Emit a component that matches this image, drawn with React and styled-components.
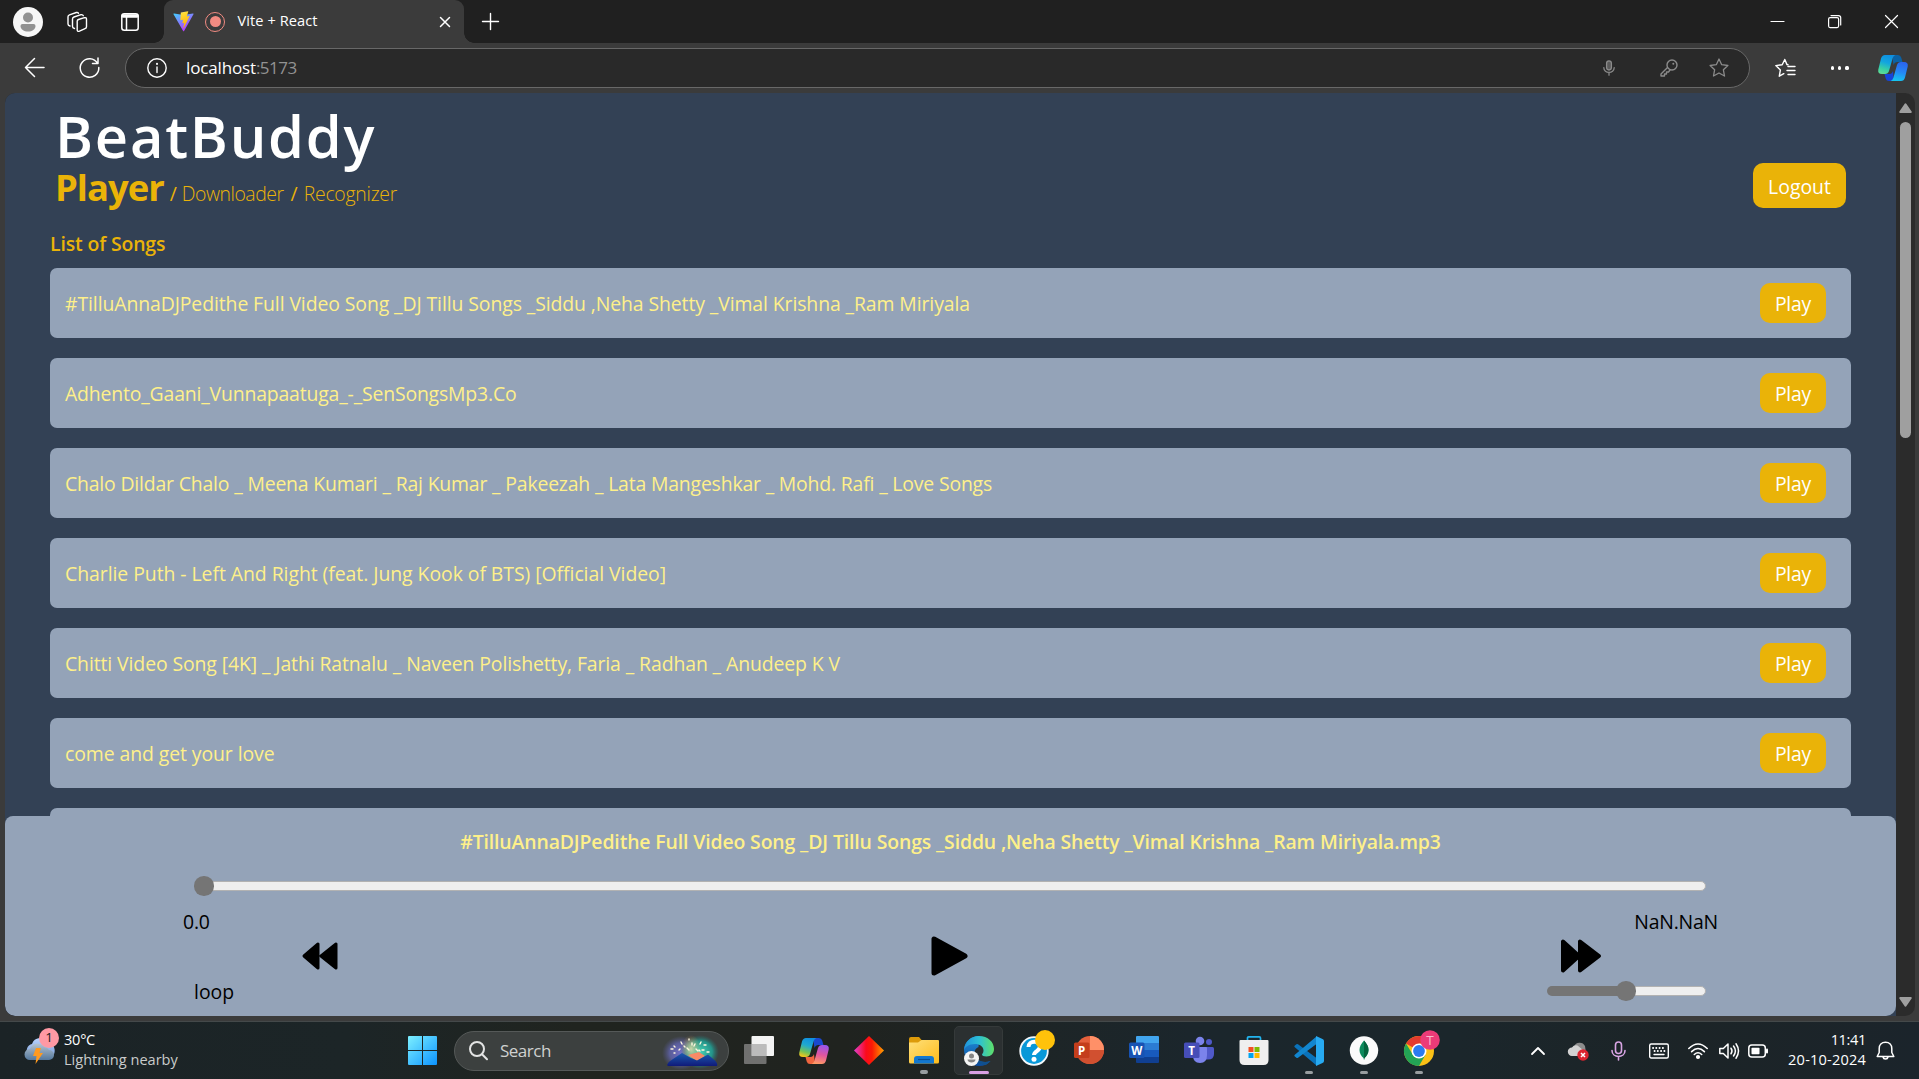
import React from "react";
import styled, { createGlobalStyle } from "styled-components";

const Global = createGlobalStyle`
  * { box-sizing: border-box; }
  html, body { margin: 0; height: 100%; overflow: hidden; background: #3b3b3b; }
  body { font-family: "Open Sans", "Noto Sans", sans-serif; }
  #root { height: 100vh; }
  svg { display: block; flex: none; overflow: visible; }
`;

const Screen = styled.div`
  display: flex;
  flex-direction: column;
  width: 100%;
  height: 100vh;
  overflow: hidden;
  white-space: nowrap;
  font-size: 19.4px;
  line-height: 30px;
`;

/* ---------- browser chrome ---------- */

const TabStrip = styled.div`
  display: flex;
  align-items: center;
  height: 43px;
  flex: none;
  background: #202020;
`;

const StripIcons = styled.div`
  display: grid;
  grid-template-columns: 53px 55px 18px;
  align-items: center;
  width: 164px;
  padding-left: 13px;
`;

const Tab = styled.div`
  position: relative;
  display: flex;
  align-items: center;
  width: 300px;
  height: 43px;
  padding: 0 13px 0 9px;
  background: #3b3b3b;
  border-radius: 9px 9px 0 0;
  color: #fff;
  font-size: 14.6px;
  &::before, &::after {
    content: "";
    position: absolute;
    bottom: 0;
    width: 10px;
    height: 10px;
  }
  &::before { left: -10px; background: radial-gradient(circle at 0 0, transparent 9.5px, #3b3b3b 10px); }
  &::after { right: -10px; background: radial-gradient(circle at 100% 0, transparent 9.5px, #3b3b3b 10px); }
`;

const TabTitle = styled.span`
  flex: 1;
  margin-left: 12.5px;
  padding-bottom: 3px;
  letter-spacing: 0.07px;
`;

const RecordDot = styled.i`
  display: grid;
  place-items: center;
  width: 20px;
  height: 20px;
  margin-left: 11px;
  border: 1.5px solid #f28b82;
  border-radius: 50%;
  &::after { content: ""; width: 11px; height: 11px; border-radius: 50%; background: #f28b82; }
`;

const NewTab = styled.div`
  flex: 1;
  padding-left: 18px;
`;

const WindowButtons = styled.div`
  display: flex;
  align-items: center;
  gap: 44px;
  padding-right: 21px;
`;

const Toolbar = styled.div`
  display: flex;
  align-items: center;
  height: 50px;
  flex: none;
  padding-left: 24px;
  background: #3b3b3b;
`;

const NavButtons = styled.div`
  display: flex;
  align-items: center;
  width: 101px;
  gap: 34px;
  padding-bottom: 1px;
`;

const AddressBar = styled.div`
  display: flex;
  align-items: center;
  width: 1625px;
  height: 40px;
  padding: 0 20px 0 21px;
  border: 1.5px solid #686868;
  border-radius: 20px;
  background: #292929;
`;

const Url = styled.span`
  flex: 1;
  margin-left: 19px;
  color: #fff;
  font-size: 17px;
  letter-spacing: -0.15px;
`;

const Port = styled.span`
  color: #929292;
  letter-spacing: -0.5px;
`;

const MicSlot = styled.div`
  margin-right: 45px;
`;

const BarIcons = styled.div`
  display: flex;
  align-items: center;
  gap: 31px;
`;

const ToolIcons = styled.div`
  display: flex;
  align-items: center;
  flex: 1;
  padding-left: 25px;
`;

const More = styled.div`
  display: flex;
  gap: 4px;
  margin: 0 29px 0 36px;
  i { width: 3.2px; height: 3.2px; border-radius: 50%; background: #fff; }
`;

/* ---------- web page ---------- */

const Viewport = styled.div`
  position: relative;
  display: flex;
  width: 1910px;
  height: 923px;
  flex: none;
  margin-left: 5px;
  border-radius: 10px;
  overflow: hidden;
  background: #2b2b2b;
`;

const Page = styled.main`
  width: 1891px;
  height: 100%;
  overflow: hidden;
  background: #334155;
`;

const Header = styled.header`
  display: flex;
  justify-content: space-between;
  align-items: flex-end;
  padding: 13px 50px 0 50px;
`;

const Brand = styled.h1`
  margin: 0;
  color: #fff;
  font-size: 57.8px;
  font-weight: 600;
  line-height: 60px;
  letter-spacing: 1.75px;
`;

const Crumbs = styled.nav`
  height: 44px;
  line-height: 42px;
  color: #eab308;
`;

const Crumb = styled.a`
  font-size: ${(p) => (p.$active ? "36.4px" : "19.4px")};
  font-weight: ${(p) => (p.$active ? 700 : 300)};
  letter-spacing: ${(p) => p.$track}px;
`;

const Slash = styled.span`
  margin: 0 ${(p) => p.$after}px 0 ${(p) => p.$before}px;
`;

const Pill = styled.button`
  display: grid;
  place-items: center;
  width: ${(p) => (p.$large ? 93 : 66)}px;
  height: ${(p) => (p.$large ? 45 : 40)}px;
  margin: 0 0 ${(p) => (p.$large ? 2 : 0)}px;
  padding: 2px 0 0;
  border: 0;
  border-radius: 10px;
  background: #eab308;
  color: #fff;
  font: inherit;
  letter-spacing: ${(p) => (p.$large ? 0 : -0.2)}px;
`;

const Songs = styled.section`
  padding: 19px 45px 0;
`;

const Heading = styled.h2`
  height: 39px;
  margin: 0;
  color: #eab308;
  font-size: 19.4px;
  font-weight: 600;
  letter-spacing: -0.13px;
`;

const SongRow = styled.div`
  display: flex;
  justify-content: space-between;
  align-items: center;
  height: 70px;
  margin-bottom: 20px;
  padding: 0 25px 0 15px;
  border-radius: 7px;
  background: #94a3b8;
  color: #fef08a;
`;

const SongName = styled.span`
  padding-top: 2px;
  letter-spacing: ${(p) => p.$track}px;
`;

const PlayerBar = styled.footer`
  position: absolute;
  left: 0;
  bottom: 0;
  width: 1891px;
  height: 200px;
  padding-top: 11px;
  border-radius: 8px 8px 10px 10px;
  background: #94a3b8;
  color: #000;
`;

const NowPlaying = styled.div`
  text-align: center;
  color: #fef08a;
  font-weight: 600;
  letter-spacing: -0.122px;
`;

const SeekRow = styled.div`
  padding: 19px 191px 0 189px;
`;

const Track = styled.div`
  display: flex;
  align-items: center;
  width: ${(p) => p.$width}px;
  height: 20px;
`;

const Filled = styled.i`
  width: ${(p) => p.$length}px;
  height: 10px;
  margin-right: -9px;
  border-radius: 5px 0 0 5px;
  background: #757575;
`;

const Rest = styled.i`
  flex: 1;
  height: 10px;
  margin-left: -8px;
  border: 1px solid #b2b2b2;
  border-radius: 5px;
  background: #efefef;
`;

const Thumb = styled.i`
  z-index: 1;
  width: 19.5px;
  height: 19.5px;
  border-radius: 50%;
  background: #757575;
`;

const Times = styled.div`
  display: flex;
  justify-content: space-between;
  height: 40px;
  padding: 11px 178px 0;
  letter-spacing: -0.2px;
`;

const Controls = styled.div`
  display: flex;
  align-items: center;
  justify-content: space-between;
  height: 40px;
  padding: 0 295px 0 297px;
`;

const BottomRow = styled.div`
  display: flex;
  align-items: center;
  justify-content: space-between;
  height: 30px;
  padding: 0 190px 0 189px;
`;

const LoopLabel = styled.span`
  padding-top: 2px;
`;

const ScrollBar = styled.div`
  display: flex;
  flex-direction: column;
  align-items: center;
  width: 19px;
  padding: 10px 0 9px;
`;

const ScrollThumb = styled.div`
  width: 11px;
  height: 316px;
  margin: 9px 0 auto;
  border-radius: 6px;
  background: #9f9f9f;
`;

/* ---------- taskbar ---------- */

const Taskbar = styled.div`
  display: flex;
  align-items: center;
  height: 58px;
  flex: none;
  margin-top: 5px;
  border-top: 1px solid #44494a;
  background: linear-gradient(90deg, #1b2326 0%, #1c2527 18%, #20241f 30%, #20231f 44%, #1b262c 62%, #1b262b 76%, #1c2427 88%, #1b242b 100%);
`;

const Weather = styled.div`
  display: flex;
  align-items: center;
  width: 395px;
  padding-left: 24px;
`;

const WeatherIcon = styled.div`
  position: relative;
  width: 40px;
  height: 46px;
  padding-top: 7px;
`;

const Badge = styled.b`
  position: absolute;
  left: 15px;
  top: 0;
  width: 20px;
  height: 20px;
  border-radius: 50%;
  background: #ff99a4;
  color: #1b1b1b;
  font-size: 13.5px;
  font-weight: 400;
  line-height: 19px;
  text-align: center;
`;

const TwoLines = styled.div`
  display: flex;
  flex-direction: column;
  padding-bottom: 4px;
  font-size: 14.55px;
  line-height: 20px;
  text-align: ${(p) => p.$align || "left"};
`;

const Line = styled.span`
  color: ${(p) => (p.$muted ? "#c9cbcb" : "#fff")};
  letter-spacing: ${(p) => p.$track || 0}px;
`;

const StartCell = styled.div`
  display: flex;
  justify-content: center;
  width: 55px;
`;

const SearchBox = styled.div`
  display: flex;
  align-items: center;
  width: 275px;
  height: 40px;
  margin-left: 4px;
  padding: 0 9px 0 14px;
  border: 1px solid #555958;
  border-radius: 20px;
  background: #3c403f;
  color: #cfd1d0;
  font-size: 17px;
  letter-spacing: -0.5px;
  span { flex: 1; margin-left: 12px; }
`;

const Apps = styled.div`
  display: flex;
  width: 720px;
  margin-left: 2px;
`;

const AppCell = styled.div`
  display: flex;
  flex-direction: column;
  align-items: center;
  width: 49px;
  height: 49px;
  margin: 0 3px;
  padding-top: 9px;
  border: 1px solid ${(p) => (p.$active ? "#353a3a" : "transparent")};
  border-radius: 5px;
  background: ${(p) => (p.$active ? "#2b3031" : "transparent")};
  &::after {
    content: "";
    width: ${(p) => (p.$active ? 20 : 8)}px;
    height: 4px;
    margin-top: 5px;
    border-radius: 2px;
    background: ${(p) => (p.$active ? "#d9a0e4" : p.$running ? "#989da0" : "transparent")};
  }
`;

const Tray = styled.div`
  display: flex;
  align-items: center;
  justify-content: flex-end;
  flex: 1;
  padding-right: 24px;
`;

const TraySlot = styled.div`
  display: flex;
  justify-content: center;
  width: ${(p) => p.$w}px;
`;

const Clock = styled.div`
  display: flex;
  justify-content: flex-end;
  width: 101px;
  padding-right: 10px;
`;

/* ---------- drawings ---------- */

const Stroke = ({ size = 20, color = "#fff", w = 1.5, children }) => (
  <svg width={size} height={size} viewBox={`0 0 ${size} ${size}`} fill="none" stroke={color} strokeWidth={w} strokeLinecap="round" strokeLinejoin="round">
    {children}
  </svg>
);

const ProfileIcon = () => (
  <svg width="30" height="30" viewBox="0 0 30 30">
    <circle cx="15" cy="15" r="15" fill="#f7f7f7" />
    <circle cx="15" cy="10.500" r="5" fill="#929292" />
    <path d="M7.500 19q0-2 2-2h11q2 0 2 2c0 3.500-3.500 5.500-7.500 5.500s-7.500-2-7.500-5.500z" fill="#929292" />
  </svg>
);

const WorkspacesIcon = () => (
  <Stroke size={22} w={1.4}>
    <path d="M12.500 8.500l6-1.800q2-.5 2 1.500v7.500q0 1.500-1.500 2l-5.500 2.500q-2.300.8-2.300-1.500v-8.500q0-1.300 1.300-1.700z" />
    <path d="M8.500 17.500q-2-.3-2-2V8q0-1.500 1.500-2l7-2.300q1.800-.3 2.300 1" />
    <path d="M4 15q-2-.5-2-2V5.800q0-1.500 1.500-2L10.300 1.500q1.700-.3 2.200.8" />
  </Stroke>
);

const VerticalTabsIcon = () => (
  <Stroke size={18} w={1.5}>
    <rect x=".8" y=".8" width="16.400" height="16.400" rx="2.500" />
    <path d="M2 3h14" strokeWidth="3.600" />
    <path d="M5.500 4v13" />
  </Stroke>
);

const ViteLogo = () => (
  <svg width="21" height="21" viewBox="0 0 410 404">
    <defs>
      <linearGradient id="viteA" x1="0" y1="0" x2=".6" y2="1"><stop stopColor="#41d1ff" /><stop offset="1" stopColor="#bd34fe" /></linearGradient>
      <linearGradient id="viteB" x1=".4" y1="0" x2=".6" y2="1"><stop stopColor="#ffea83" /><stop offset=".1" stopColor="#ffdd35" /><stop offset="1" stopColor="#ffa800" /></linearGradient>
    </defs>
    <path d="M400 60 216 388c-4 7-14 7-18 0L10 60c-4-8 2-17 11-16l184 33 184-33c9-1 15 8 11 16z" fill="url(#viteA)" />
    <path d="M293 1 157 27c-3 1-4 2-4 5l-9 141c0 3 3 6 7 5l38-9c4-1 7 2 6 6l-11 55c-1 4 2 7 6 6l23-7c4-1 7 2 6 6l-18 87c-1 5 6 8 9 4l2-3 111-222c2-4-1-8-6-7l-39 8c-4 1-7-3-6-6l26-88c1-4-2-7-5-7z" fill="url(#viteB)" />
  </svg>
);

const Copilot = ({ vivid }) => {
  const id = vivid ? "cv" : "cb";
  return (
    <svg width="30" height="30" viewBox="0 0 30 30">
      <defs>
        <linearGradient id={id + "1"} x1=".6" y1="0" x2=".3" y2="1">
          <stop stopColor="#0f8fe0" /><stop offset=".4" stopColor={vivid ? "#20a9d0" : "#12a5e0"} /><stop offset=".75" stopColor={vivid ? "#75c455" : "#38cfa5"} /><stop offset="1" stopColor={vivid ? "#f3c71c" : "#5ddc95"} />
        </linearGradient>
        <linearGradient id={id + "2"} x1=".6" y1="0" x2=".4" y2="1">
          <stop stopColor={vivid ? "#9a55ec" : "#2a64ee"} /><stop offset=".5" stopColor={vivid ? "#e0559f" : "#2586f5"} /><stop offset="1" stopColor={vivid ? "#ff9a64" : "#16c5ee"} />
        </linearGradient>
      </defs>
      <path d="M14 2h6q2.500 0 3.200 2.500L24.500 9h-5q-3 0-4 3z" fill={vivid ? "#1a48cf" : "#0b62a5"} />
      <path d="M16 28h-5q-2.500 0-3.300-2.500L6.500 21h5q2.500 0 3.500-3z" fill={vivid ? "#f0653f" : "#1645d8"} />
      <path d="M7 2h10.500q-2 .5-2.800 3L11 18q-1 3-4 3H4q-4.500 0-3.700-4.500L3 5.500Q4 2 7 2z" fill={`url(#${id}1)`} />
      <path d="M23 28H12.500q2-.5 2.800-3L19 12q1-3 4-3h3q4.500 0 3.700 4.500L27 24.500Q26 28 23 28z" fill={`url(#${id}2)`} />
    </svg>
  );
};

const PrevIcon = () => (
  <svg width="36" height="28" viewBox="0 0 36 28">
    <path d="M2 14 16 2v24zM19 14 34 2v24z" stroke="#000" strokeWidth="3" strokeLinejoin="round" />
  </svg>
);
const PlayIcon = () => (
  <svg width="37" height="40" viewBox="0 0 37 40">
    <path d="M3 3v34L34 20z" stroke="#000" strokeWidth="5" strokeLinejoin="round" />
  </svg>
);
const NextIcon = () => (
  <svg width="40" height="34" viewBox="0 0 40 34">
    <path d="M2 2.500v29L18 17zM19 2.500v29L38 17z" stroke="#000" strokeWidth="4" strokeLinejoin="round" />
  </svg>
);

const WeatherSvg = () => (
  <svg width="32" height="36" viewBox="0 0 32 36">
    <defs>
      <linearGradient id="cl1" x1="0" y1="0" x2="0" y2="1"><stop stopColor="#b9d4ff" /><stop offset="1" stopColor="#7ea0d8" /></linearGradient>
      <linearGradient id="cl2" x1="0" y1="0" x2="0" y2="1"><stop stopColor="#b5c3cf" /><stop offset="1" stopColor="#54789d" /></linearGradient>
    </defs>
    <path d="M4 20a7 7 0 0 1 4-11A9 9 0 0 1 24 7a9 9 0 0 1 5 14z" fill="url(#cl1)" />
    <path d="M6 25a5.500 5.500 0 0 1 0-11 8 8 0 0 1 14-2 6 6 0 0 1 5 3 5 5 0 0 1 0 10z" fill="url(#cl2)" />
    <path d="M12 13h5l-1.500 5H19l-7.500 11 1-8H9z" fill="#ff9a1f" />
  </svg>
);

const StartLogo = () => (
  <svg width="29" height="29" viewBox="0 0 29 29">
    <defs><linearGradient id="win" x1="0" y1="0" x2="1" y2="1"><stop stopColor="#7df0ff" /><stop offset="1" stopColor="#0c93ff" /></linearGradient></defs>
    <path d="M1 0h13v14H0V1q0-1 1-1zM15 0h13q1 0 1 1v13H15zM0 15h14v14H1q-1 0-1-1zM15 15h14v13q0 1-1 1H15z" fill="url(#win)" />
  </svg>
);

const SearchArt = () => (
  <svg width="57" height="32" viewBox="0 0 57 32">
    <defs>
      <radialGradient id="fw1"><stop stopColor="#7370c8" /><stop offset=".6" stopColor="#5f62a8" stopOpacity=".85" /><stop offset="1" stopColor="#55588c" stopOpacity="0" /></radialGradient>
      <radialGradient id="fw2"><stop stopColor="#48d5b8" /><stop offset=".65" stopColor="#219d92" stopOpacity=".9" /><stop offset="1" stopColor="#28716c" stopOpacity="0" /></radialGradient>
      <radialGradient id="fw3"><stop stopColor="#ffe9b0" /><stop offset="1" stopColor="#ecb65c" stopOpacity="0" /></radialGradient>
      <linearGradient id="mt" x1="0" y1="0" x2="0" y2="1"><stop stopColor="#1b5cae" /><stop offset="1" stopColor="#101a7a" /></linearGradient>
    </defs>
    <ellipse cx="19" cy="18" rx="19" ry="17" fill="url(#fw1)" />
    <ellipse cx="38" cy="17" rx="19" ry="17" fill="url(#fw2)" />
    <ellipse cx="29" cy="14" rx="10" ry="14" fill="url(#fw3)" opacity=".75" />
    <path d="M26 20l9 6 8-5-6-4z" fill="#f88a66" />
    <path d="M5 30q2-4 6-6l9-6 9 5 6 2.500 11-6 7 6q3 3 2 5.500H6z" fill="url(#mt)" />
    <path d="M9 14h2M12 11l1 1M19 7l1 2M27 4v1M22 11l1 1M33 9l-1 2M39 7l-1 2M44 10h-2M47 17h-2M13 18h-1M37 15l1 1M25 13l2 2M30 8v2M42 15h-2M34 14l2 2M18 14l-1 1" stroke="#fff7df" strokeWidth="1.400" strokeLinecap="round" />
  </svg>
);

const TaskViewIcon = () => (
  <svg width="30" height="29" viewBox="0 0 30 29">
    <rect x="7.500" y="0" width="22.500" height="20" rx="1" fill="#f3f3f3" />
    <rect x="0" y="8" width="22.500" height="20" rx="1" fill="#8b8b8b" fillOpacity=".75" />
    <path d="M7.500 8h15v12h-15z" fill="#c5c5c5" fillOpacity=".7" />
  </svg>
);

const DiamondIcon = () => (
  <svg width="30" height="29" viewBox="0 0 30 29">
    <defs><linearGradient id="dia"><stop stopColor="#e040d0" /><stop offset=".4" stopColor="#fb0a1c" /><stop offset=".6" stopColor="#fc1a05" /><stop offset="1" stopColor="#ffa000" /></linearGradient></defs>
    <path d="M15 0 30 14.500 15 29 0 14.500z" fill="url(#dia)" />
  </svg>
);

const FolderIcon = () => (
  <svg width="30" height="29" viewBox="0 0 30 29">
    <defs><linearGradient id="fol" x1="0" y1="0" x2="1" y2="1"><stop stopColor="#ffe07a" /><stop offset="1" stopColor="#fdbb1b" /></linearGradient></defs>
    <path d="M0 3q0-2 2-2h8l3 3.500V9H0z" fill="#dd9b0a" />
    <path d="M0 6.500h9L12.500 4H29q1 0 1 1v21q0 1.500-1.500 1.500h-27Q0 27.500 0 26z" fill="url(#fol)" />
    <path d="M5 27.500V23q0-3 3-3h14q3 0 3 3v4.500z" fill="#1378cf" />
    <path d="M9 23.500h12" stroke="#0a4f92" strokeWidth="1.200" />
  </svg>
);

const EdgeIcon = () => (
  <svg width="30" height="30" viewBox="0 0 30 30">
    <defs>
      <linearGradient id="ed1" x1="0" y1=".5" x2="1" y2=".5"><stop stopColor="#2092dc" /><stop offset=".5" stopColor="#2cc0d5" /><stop offset="1" stopColor="#5fe068" /></linearGradient>
      <linearGradient id="ed2" x1="0" y1="0" x2="0" y2="1"><stop stopColor="#2090dc" /><stop offset="1" stopColor="#0d4b9c" /></linearGradient>
    </defs>
    <path d="M15 0C6 0 0 7 0 14c0 9 7 16 15 16 5 0 9-2 11.500-5-8 3-16-1-16-8 0-3 1.500-5 4-6z" fill="url(#ed2)" />
    <path d="M0 14C1 5 7.500 0 15 0c9 0 15 6 15 13 0 4.500-3 7.500-7.500 7.500-3 0-4.500-1-4.500-2 0-.8 1.500-1.300 1.500-4C19.500 10.500 15.500 8 11 8 5 8 1 11 0 14z" fill="url(#ed1)" />
    <path d="M10.500 17c0 7 8 11 16 8 0 0-2 2.500-5 4-6 0-13-4-11-12z" fill="#10508e" />
    <circle cx="7.500" cy="22.500" r="7.500" fill="#f5f5f5" />
    <circle cx="7.500" cy="20" r="2.500" fill="#858585" />
    <path d="M3.500 23.500h8c0 4-8 4-8 0z" fill="#858585" />
  </svg>
);

const HelpIcon = () => (
  <svg width="30" height="30" viewBox="0 0 30 30">
    <circle cx="15" cy="15" r="13.800" fill="#0898d8" stroke="#f3f8fb" strokeWidth="1.800" />
    <path d="M9.500 11c0-7 11.500-7 11.500-.5 0 4.500-6 4.500-6 8.500" fill="none" stroke="#fff" strokeWidth="4" />
    <circle cx="15" cy="23.300" r="2.500" fill="#fff" />
    <circle cx="26" cy="4" r="10" fill="#ffc20a" />
  </svg>
);

const GlyphTile = ({ color, letter }) => (
  <>
    <rect x="0" y="6.500" width="15.500" height="15.500" rx="1.500" fill={color} />
    <text x="7.700" y="18.500" fontSize="11.500" fontWeight="700" fill="#fff" textAnchor="middle" fontFamily="Open Sans, sans-serif">{letter}</text>
  </>
);

const PowerPointIcon = () => (
  <svg width="30" height="29" viewBox="0 0 30 29">
    <circle cx="16" cy="14" r="14" fill="#e4603c" />
    <path d="M16 0a14 14 0 0 1 14 14H16z" fill="#ff9068" />
    <path d="M2 14h28a14 14 0 0 1-28 0z" fill="#d15030" />
    <GlyphTile color="#c43e1c" letter="P" />
  </svg>
);

const WordIcon = () => (
  <svg width="30" height="29" viewBox="0 0 30 29">
    <path d="M7 1q0-1 1-1h21q1 0 1 1v6H7z" fill="#41a5ee" />
    <path d="M7 7h23v7H7z" fill="#2b7cd3" />
    <path d="M7 14h23v7H7z" fill="#185abd" />
    <path d="M7 21h23v5q0 1-1 1H8q-1 0-1-1z" fill="#103f91" />
    <GlyphTile color="#1853b3" letter="W" />
  </svg>
);

const TeamsIcon = () => (
  <svg width="30" height="29" viewBox="0 0 30 29">
    <circle cx="25" cy="6" r="3" fill="#5059c9" />
    <path d="M20 11h8.500q1.500 0 1.500 1.500V18q0 5.500-6 5.500h-4z" fill="#5059c9" />
    <circle cx="16" cy="5" r="4.300" fill="#7b83eb" />
    <path d="M9 11h13q1 0 1 1v7q0 8-7 8t-7-8z" fill="#7b83eb" />
    <GlyphTile color="#464eb8" letter="T" />
  </svg>
);

const StoreIcon = () => (
  <svg width="30" height="29" viewBox="0 0 30 29">
    <path d="M8.500 6V2q0-1.200 1.200-1.200h10.600q1.200 0 1.200 1.200v4" fill="none" stroke="#22b4ee" strokeWidth="1.700" />
    <path d="M.5 5Q.5 4 1.500 4h27q1 0 1 1v19q0 5-5 5h-19q-5 0-5-5z" fill="#efefef" />
    <path d="M9.500 11h5v5h-5z" fill="#f25022" /><path d="M15.500 11h5v5h-5z" fill="#7fba00" />
    <path d="M9.500 17h5v5h-5z" fill="#00a4ef" /><path d="M15.500 17h5v5h-5z" fill="#ffb900" />
  </svg>
);

const CodeIcon = () => (
  <svg width="30" height="30" viewBox="0 0 30 30">
    <path d="M.6 9.700 2.400 8.200q.8-.5 1.600.1L22.500 22v7.500L.8 11.300q-.9-.8-.2-1.600z" fill="#0a72ba" />
    <path d="M.6 20.300l1.800 1.500q.8.500 1.600-.1L22.500 8V.5L.8 18.700q-.9.800-.2 1.600z" fill="#1286cf" />
    <path d="M22 0l6.500 3q1.500.7 1.500 2v20q0 1.500-1.500 2L22 30z" fill="#27aaf2" />
  </svg>
);

const LeafIcon = () => (
  <svg width="30" height="30" viewBox="0 0 30 30">
    <circle cx="15" cy="14.500" r="14.200" fill="#fafafa" />
    <path d="M15 4.500c3 3.500 4.500 6 4.500 9.500s-1.800 6-4 8l-.5 2-.5-2c-2.200-2-4-4.500-4-8S12 8 15 4.500z" fill="#0b8a5c" />
    <path d="M15 4.500c3 3.500 4.500 6 4.500 9.500s-1.800 6-4 8l-.5 2z" fill="#04633d" />
  </svg>
);

const ChromeIcon = () => (
  <svg width="30" height="30" viewBox="0 0 30 30">
    <circle cx="15" cy="15" r="15" fill="#fbc116" />
    <path d="M15 15 2 7.500A15 15 0 0 1 28 7.500H15z" fill="#e33b2e" />
    <path d="M2 7.500A15 15 0 0 0 15 30l6.500-11.300L9 19z" fill="#23a455" />
    <circle cx="15" cy="15" r="7.500" fill="#fff" />
    <circle cx="15" cy="15" r="5.900" fill="#2a7bf0" />
    <circle cx="26" cy="4" r="9.800" fill="#ec3b78" />
    <text x="26" y="9" fontSize="13.500" fill="#f9b9cd" textAnchor="middle" fontFamily="Open Sans, sans-serif">T</text>
  </svg>
);

const CloudErrorIcon = () => (
  <svg width="21" height="20" viewBox="0 0 21 20">
    <path d="M5 12a4 4 0 0 1 1-6.500A6 6 0 0 1 17 5l1 7z" fill="#8c8c8c" />
    <path d="M4 15a4.200 4.200 0 0 1 0-8.400q2-3 5.500-2L15 9l-3 6z" fill="#d2d2d2" />
    <circle cx="15" cy="14" r="5.700" fill="#dc2430" />
    <path d="M13 12l4 4M17 12l-4 4" stroke="#fff" strokeWidth="1.500" />
  </svg>
);

const Mic = ({ color, h = 20, solid }) => (
  <svg width={h * 0.75} height={h} viewBox="0 0 15 20" fill="none" stroke={color} strokeWidth="1.600" strokeLinecap="round">
    <rect x="4.500" y="1" width="6" height="11.500" rx="3" fill={solid ? "#5a5a5a" : "none"} />
    <path d="M1 9.500c0 8 13 8 13 0M7.500 15.500V19" />
  </svg>
);

/* ---------- data ---------- */

const songs = [
  ["#TilluAnnaDJPedithe Full Video Song _DJ Tillu Songs _Siddu ,Neha Shetty _Vimal Krishna _Ram Miriyala", -0.09],
  ["Adhento_Gaani_Vunnapaatuga_-_SenSongsMp3.Co", -0.158],
  ["Chalo Dildar Chalo _ Meena Kumari _ Raj Kumar _ Pakeezah _ Lata Mangeshkar _ Mohd. Rafi _ Love Songs", -0.169],
  ["Charlie Puth - Left And Right (feat. Jung Kook of BTS) [Official Video]", -0.045],
  ["Chitti Video Song [4K] _ Jathi Ratnalu _ Naveen Polishetty, Faria _ Radhan _ Anudeep K V", -0.094],
  ["come and get your love", -0.074],
  ["", 0],
];

const apps = [
  { icon: <TaskViewIcon /> },
  { icon: <Copilot vivid /> },
  { icon: <DiamondIcon /> },
  { icon: <FolderIcon />, running: true },
  { icon: <EdgeIcon />, active: true },
  { icon: <HelpIcon /> },
  { icon: <PowerPointIcon /> },
  { icon: <WordIcon /> },
  { icon: <TeamsIcon /> },
  { icon: <StoreIcon /> },
  { icon: <CodeIcon />, running: true },
  { icon: <LeafIcon />, running: true },
  { icon: <ChromeIcon />, running: true },
];

export default function App() {
  return (
    <Screen>
      <Global />
      <TabStrip>
        <StripIcons>
          <ProfileIcon />
          <WorkspacesIcon />
          <VerticalTabsIcon />
        </StripIcons>
        <Tab>
          <ViteLogo />
          <RecordDot />
          <TabTitle>Vite + React</TabTitle>
          <Stroke size={12}><path d="M1.500 1.500l9 9M10.500 1.500l-9 9" /></Stroke>
        </Tab>
        <NewTab>
          <Stroke size={17} w={1.4}><path d="M8.500 .5v16M.5 8.500h16" /></Stroke>
        </NewTab>
        <WindowButtons>
          <Stroke size={13} w={1.2}><path d="M0 6.500h13" /></Stroke>
          <Stroke size={13} w={1.2}>
            <rect x=".6" y="2.600" width="10" height="10" rx="1.500" />
            <path d="M3 .6h7.500q2.200 0 2.200 2.200V10" />
          </Stroke>
          <Stroke size={13} w={1.2}><path d="M.5 .5l12 12M12.500 .5l-12 12" /></Stroke>
        </WindowButtons>
      </TabStrip>

      <Toolbar>
        <NavButtons>
          <Stroke size={21}><path d="M20 10.500H1.500M10.500 1.500l-9 9 9 9" /></Stroke>
          <Stroke size={21}><path d="M18.500 6.200a9.300 9.300 0 1 0 1.300 4.300M19 1v5.500h-5.500" /></Stroke>
        </NavButtons>
        <AddressBar>
          <Stroke size={20} w={1.4}>
            <circle cx="10" cy="10" r="9.200" />
            <path d="M10 9v5.500" /><path d="M10 5.800v.2" strokeWidth="2" />
          </Stroke>
          <Url>localhost<Port>:5173</Port></Url>
          <MicSlot><Mic color="#8b8b8b" h={16} solid /></MicSlot>
          <BarIcons>
            <Stroke size={18} color="#8b8b8b" w={1.4}>
              <circle cx="12" cy="6" r="5" /><path d="M7.500 8.500 1 15v2h3.500v-2h2v-2h2l1.500-2" /><path d="M13.300 4.700v.1" strokeWidth="2" />
            </Stroke>
            <Stroke color="#8b8b8b" w={1.3}>
              <path d="M10 1l2.700 5.700 6.200.8-4.500 4.300 1.100 6.200L10 15l-5.500 3 1.100-6.200L1.100 7.500l6.200-.8z" />
            </Stroke>
          </BarIcons>
        </AddressBar>
        <ToolIcons>
          <Stroke w={1.4}>
            <path d="M13 6.800 12 6.600 9.800 1.500 7.200 6.700.8 7.600l4.600 4.300-1.100 6.300 4.500-2.500" />
            <path d="M13 8.500h7M12 12.500h8M13 16.500h7" />
          </Stroke>
          <More><i /><i /><i /></More>
          <Copilot />
        </ToolIcons>
      </Toolbar>

      <Viewport>
        <Page>
          <Header>
            <div>
              <Brand>BeatBuddy</Brand>
              <Crumbs>
                <Crumb $active $track={-1}>Player</Crumb>
                <Slash $before={6} $after={5}>/</Slash>
                <Crumb $track={-0.45}>Downloader</Crumb>
                <Slash $before={7} $after={6}>/</Slash>
                <Crumb $track={-0.25}>Recognizer</Crumb>
              </Crumbs>
            </div>
            <Pill $large>Logout</Pill>
          </Header>
          <Songs>
            <Heading>List of Songs</Heading>
            {songs.map(([name, track], i) => (
              <SongRow key={i}>
                <SongName $track={track}>{name}</SongName>
                {name && <Pill>Play</Pill>}
              </SongRow>
            ))}
          </Songs>
        </Page>
        <ScrollBar>
          <svg width="13" height="10" viewBox="0 0 13 10"><path d="M6.500 1.300 1.200 9h10.600z" fill="#9f9f9f" stroke="#9f9f9f" strokeWidth="2" strokeLinejoin="round" /></svg>
          <ScrollThumb />
          <svg width="13" height="10" viewBox="0 0 13 10"><path d="M6.500 8.700 1.200 1h10.600z" fill="#9f9f9f" stroke="#9f9f9f" strokeWidth="2" strokeLinejoin="round" /></svg>
        </ScrollBar>
        <PlayerBar>
          <NowPlaying>#TilluAnnaDJPedithe Full Video Song _DJ Tillu Songs _Siddu ,Neha Shetty _Vimal Krishna _Ram Miriyala.mp3</NowPlaying>
          <SeekRow>
            <Track $width={1512}><Thumb /><Rest /></Track>
          </SeekRow>
          <Times><span>0.0</span><span>NaN.NaN</span></Times>
          <Controls><PrevIcon /><PlayIcon /><NextIcon /></Controls>
          <BottomRow>
            <LoopLabel>loop</LoopLabel>
            <Track $width={159}><Filled $length={78} /><Thumb /><Rest /></Track>
          </BottomRow>
        </PlayerBar>
      </Viewport>

      <Taskbar>
        <Weather>
          <WeatherIcon><WeatherSvg /><Badge>1</Badge></WeatherIcon>
          <TwoLines>
            <Line $track={-0.25}>30°C</Line>
            <Line $muted>Lightning nearby</Line>
          </TwoLines>
        </Weather>
        <StartCell><StartLogo /></StartCell>
        <SearchBox>
          <Stroke size={19} w={2} color="#e3e4e4"><circle cx="8" cy="8" r="7" /><path d="M13 13.200l5 5" /></Stroke>
          <span>Search</span>
          <SearchArt />
        </SearchBox>
        <Apps>
          {apps.map((a, i) => <AppCell key={i} $active={a.active} $running={a.running}>{a.icon}</AppCell>)}
        </Apps>
        <Tray>
          <TraySlot $w={40}><Stroke size={14} w={1.8}><path d="M1 10l6-6 6 6" /></Stroke></TraySlot>
          <TraySlot $w={40}><CloudErrorIcon /></TraySlot>
          <TraySlot $w={40}><Mic color="#d9a5e4" h={20} /></TraySlot>
          <TraySlot $w={41}>
            <Stroke w={1.4}>
              <rect x=".7" y="3" width="18.600" height="14" rx="1.500" />
              <path d="M4 7h.2M7.200 7h.2M10.500 7h.2M13.800 7h.2M5.500 10h.2M8.700 10h.2M12 10h.2M15.300 10h.2" strokeWidth="1.800" /><path d="M5 13.500h10" />
            </Stroke>
          </TraySlot>
          <TraySlot $w={37}>
            <Stroke w={1.6}>
              <path d="M.8 7.500q9.200-9 18.400 0M3.600 10.600q6.400-6.200 12.800 0M6.300 13.500q3.700-3.500 7.400 0" />
              <circle cx="10" cy="16" r="1.300" fill="#fff" />
            </Stroke>
          </TraySlot>
          <TraySlot $w={25}>
            <Stroke>
              <path d="M.8 7.500v5h3.500L9 17V3L4.300 7.500zM12 7.200q2 2.800 0 5.600M14.500 5q3.800 5 0 10M17 2.800q5 7.200 0 14.400" />
            </Stroke>
          </TraySlot>
          <TraySlot $w={34}>
            <Stroke>
              <rect x=".8" y="4" width="16.500" height="12" rx="3" />
              <path d="M19 8.500v3" strokeWidth="2" /><rect x="3.500" y="6.700" width="8" height="6.600" rx=".8" fill="#fff" stroke="none" />
            </Stroke>
          </TraySlot>
          <Clock>
            <TwoLines $align="right">
              <Line $track={-0.35}>11:41</Line>
              <Line $track={0.2}>20-10-2024</Line>
            </TwoLines>
          </Clock>
          <Stroke size={19}>
            <path d="M9.500 1.200c4 0 6.300 2.800 6.300 6.300v4l2 4H1.200l2-4v-4C3.200 4 5.500 1.200 9.500 1.200zM7 16c.5 2.600 4.500 2.600 5 0" />
          </Stroke>
        </Tray>
      </Taskbar>
    </Screen>
  );
}
